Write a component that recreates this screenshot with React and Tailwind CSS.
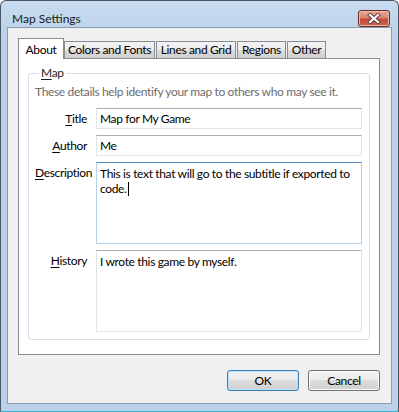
const font = { fontFamily: 'Lato, "Noto Sans", sans-serif' };

const inactiveTab =
  'h-[17px] flex items-center justify-center border border-b-0 border-[#898c95] bg-[linear-gradient(to_bottom,#f3f3f3_0%,#ebebeb_50%,#dcdcdc_50%,#cfcfcf_100%)] text-black whitespace-nowrap';

const Label = ({ first, rest, top }) => (
  <div className={`text-right leading-[15px] whitespace-nowrap ${top ? 'pt-[3px]' : 'self-center'}`}>
    <span className="underline underline-offset-[2px]">{first}</span>
    {rest}
  </div>
);

const Field = ({ children }) => (
  <div className="h-[21px] flex items-center px-[3px] border border-[#dfe3ea] border-t-[#abadb3] bg-white leading-[15px] whitespace-nowrap">
    {children}
  </div>
);

const Btn = ({ children, primary }) => (
  <div
    className={`w-[72px] h-[21px] flex items-center justify-center rounded-[3px] border ${
      primary ? 'border-[#3c7fb1] shadow-[inset_0_0_0_1px_#b6e3fb]' : 'border-[#707070] shadow-[inset_0_0_0_1px_#fbfbfb]'
    } bg-[linear-gradient(to_bottom,#f2f2f2_0%,#ebebeb_50%,#dddddd_50%,#cfcfcf_100%)]`}
  >
    {children}
  </div>
);

export default function App() {
  return (
    <div style={font} className="w-[399px] h-[412px] text-[12px] tracking-[-0.35px] text-black">
      <div className="h-full flex flex-col border border-[#4b5665] border-b-[#34b3c7] rounded-t-[6px] bg-[linear-gradient(to_bottom,#c8dbef_0%,#b9d1ea_40px,#b9d1ea_100%)] px-[6px] pb-[7px]">
        {/* title bar */}
        <div className="h-[28px] flex items-start justify-between pt-[9px] pl-[5px] pr-[2px]">
          <span className="leading-[17px] text-[#1b1b1b] tracking-normal">Map Settings</span>
          <div className="w-[32px] h-[17px] rounded-[3px] border border-[#6b2c22] bg-[linear-gradient(to_bottom,#e9a897_0%,#d98373_45%,#c5493a_55%,#cd6450_100%)] shadow-[inset_0_0_0_1px_#f0b9ac] flex items-center justify-center">
            <svg width="14" height="11" viewBox="0 0 14 11">
              <path d="M3 2 L11 9 M11 2 L3 9" stroke="#5a3a36" strokeWidth="4" strokeLinecap="square" />
              <path d="M3 2 L11 9 M11 2 L3 9" stroke="#ffffff" strokeWidth="2.2" strokeLinecap="square" />
            </svg>
          </div>
        </div>

        {/* client area */}
        <div className="flex-1 flex flex-col border border-[#8a9cb1] bg-[#f0f0f0] pt-[10px] pl-[10px] pr-[11px] pb-[12px]">
          <div className="flex-1 flex flex-col">
            <div className="flex items-end">
              <div className="relative z-10 w-[46px] h-[21px] -mb-px flex items-start justify-center pt-[2px] border border-b-0 border-[#898c95] bg-white">
                About
              </div>
              <div className={`${inactiveTab} w-[91px]`}>Colors and Fonts</div>
              <div className={`${inactiveTab} w-[80px] ml-px`}>Lines and Grid</div>
              <div className={`${inactiveTab} w-[49px] ml-px`}>Regions</div>
              <div className={`${inactiveTab} w-[39px] ml-px`}>Other</div>
            </div>

            <div className="flex-1 flex flex-col border border-[#898c95] bg-white px-[9px] pb-[14px]">
              <fieldset className="flex-1 mt-[6px] border border-[#d5dfe5] rounded-[3px] pl-[6px] pr-[7px] pb-[7px] min-w-0">
                <legend className="ml-[4px] px-[2px] leading-[16px] text-[#1e1e1e]">
                  <span className="underline underline-offset-[2px]">M</span>ap
                </legend>
                <p className="mt-[3px] leading-[16px] text-[#6d6d6d] whitespace-nowrap">
                  These details help identify your map to others who may see it.
                </p>
                <div className="mt-[8px] grid grid-cols-[52px_minmax(0,1fr)] gap-x-[9px] gap-y-[6px]">
                  <Label first="T" rest="itle" />
                  <Field>Map for My Game</Field>

                  <Label first="A" rest="uthor" />
                  <Field>Me</Field>

                  <Label first="D" rest="escription" top />
                  <div className="h-[82px] px-[3px] pt-[3px] border border-[#b4d1ea] border-t-[#5b8fc0] bg-white leading-[15px] whitespace-nowrap overflow-hidden">
                    This is text that will go to the subtitle if exported to
                    <br />
                    code.<span className="inline-block w-px h-[14px] bg-black align-[-3px] ml-px" />
                  </div>

                  <Label first="H" rest="istory" top />
                  <div className="h-[82px] px-[3px] pt-[3px] border border-[#dfe3ea] border-t-[#abadb3] bg-white leading-[15px] whitespace-nowrap">
                    I wrote this game by myself.
                  </div>
                </div>
              </fieldset>
            </div>
          </div>

          <div className="mt-[15px] flex justify-end gap-[9px]">
            <Btn primary>OK</Btn>
            <Btn>Cancel</Btn>
          </div>
        </div>
      </div>
    </div>
  );
}
